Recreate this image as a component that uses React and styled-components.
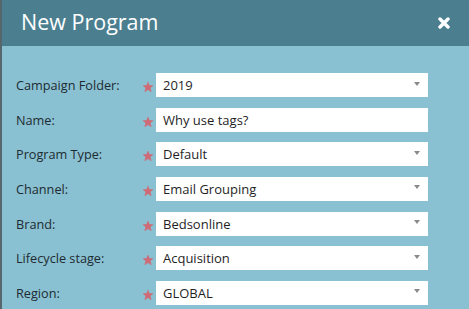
import React from "react";
import styled, { createGlobalStyle } from "styled-components";

const Global = createGlobalStyle`
  html, body { margin: 0; padding: 0; background: #8ac1d2; }
  body { font-family: "Open Sans", "Liberation Sans", sans-serif; }
`;

const Dialog = styled.div`
  width: 469px;
  height: 309px;
  box-sizing: border-box;
  border-left: 2px solid #56666c;
  background: #8ac1d2;
  display: flex;
  flex-direction: column;
  overflow: hidden;
`;

const Header = styled.div`
  height: 46px;
  flex: none;
  background: #4b7f90;
  display: flex;
  align-items: center;
  justify-content: space-between;
  padding: 0 19px 0 19px;
  box-sizing: border-box;
`;

const Title = styled.h1`
  margin: 0;
  font-family: "Open Sans", sans-serif;
  font-weight: 400;
  font-size: 21.5px;
  color: #ffffff;
  line-height: 1;
  position: relative;
  top: -1px;
`;

const Close = styled.button`
  border: 0;
  background: none;
  padding: 0;
  width: 12px;
  height: 12px;
  display: flex;
  cursor: pointer;
`;

const Form = styled.div`
  display: flex;
  flex-direction: column;
  gap: 10.67px;
  padding: 27px 0 0 14px;
`;

const Row = styled.div`
  display: grid;
  grid-template-columns: 125px 15px 272px;
  align-items: center;
  height: 24px;
`;

const Label = styled.label`
  font-size: 12.7px;
  color: #1d2b31;
  white-space: nowrap;
`;

const Star = styled.span`
  display: flex;
  justify-content: center;
  position: relative;
  top: 2px;
  left: -1px;
`;

const Field = styled.div`
  height: 24px;
  background: #ffffff;
  display: flex;
  align-items: center;
  justify-content: space-between;
  padding: 0 8px 0 7px;
  box-sizing: border-box;
  font-size: 13px;
  color: #1f1f1f;
`;

const Arrow = styled.span`
  width: 0;
  height: 0;
  border-left: 3.5px solid transparent;
  border-right: 3.5px solid transparent;
  border-top: 4px solid #8a8a8a;
  margin-top: -3px;
`;

const fields = [
  { label: "Campaign Folder:", value: "2019", select: true },
  { label: "Name:", value: "Why use tags?", select: false },
  { label: "Program Type:", value: "Default", select: true },
  { label: "Channel:", value: "Email Grouping", select: true },
  { label: "Brand:", value: "Bedsonline", select: true },
  { label: "Lifecycle stage:", value: "Acquisition", select: true },
  { label: "Region:", value: "GLOBAL", select: true },
];

function RequiredStar() {
  return (
    <svg width="10" height="10" viewBox="0 0 10 10">
      <polygon
        points="5,0.2 6.3,3.5 9.9,3.6 7.1,5.9 8.2,9.7 5,7.6 1.8,9.7 2.9,5.9 0.1,3.6 3.7,3.5"
        fill="#d06a75"
        stroke="#d06a75"
        strokeWidth="0.6"
        strokeLinejoin="round"
      />
    </svg>
  );
}

export default function App() {
  return (
    <>
      <Global />
      <Dialog>
        <Header>
          <Title>New Program</Title>
          <Close aria-label="Close">
            <svg width="12" height="12" viewBox="0 0 12 12">
              <path d="M2 2 L10 10 M10 2 L2 10" stroke="#fff" strokeWidth="3.4" strokeLinecap="round" />
            </svg>
          </Close>
        </Header>
        <Form>
          {fields.map((f) => (
            <Row key={f.label}>
              <Label>{f.label}</Label>
              <Star>
                <RequiredStar />
              </Star>
              <Field>
                <span>{f.value}</span>
                {f.select && <Arrow />}
              </Field>
            </Row>
          ))}
        </Form>
      </Dialog>
    </>
  );
}
